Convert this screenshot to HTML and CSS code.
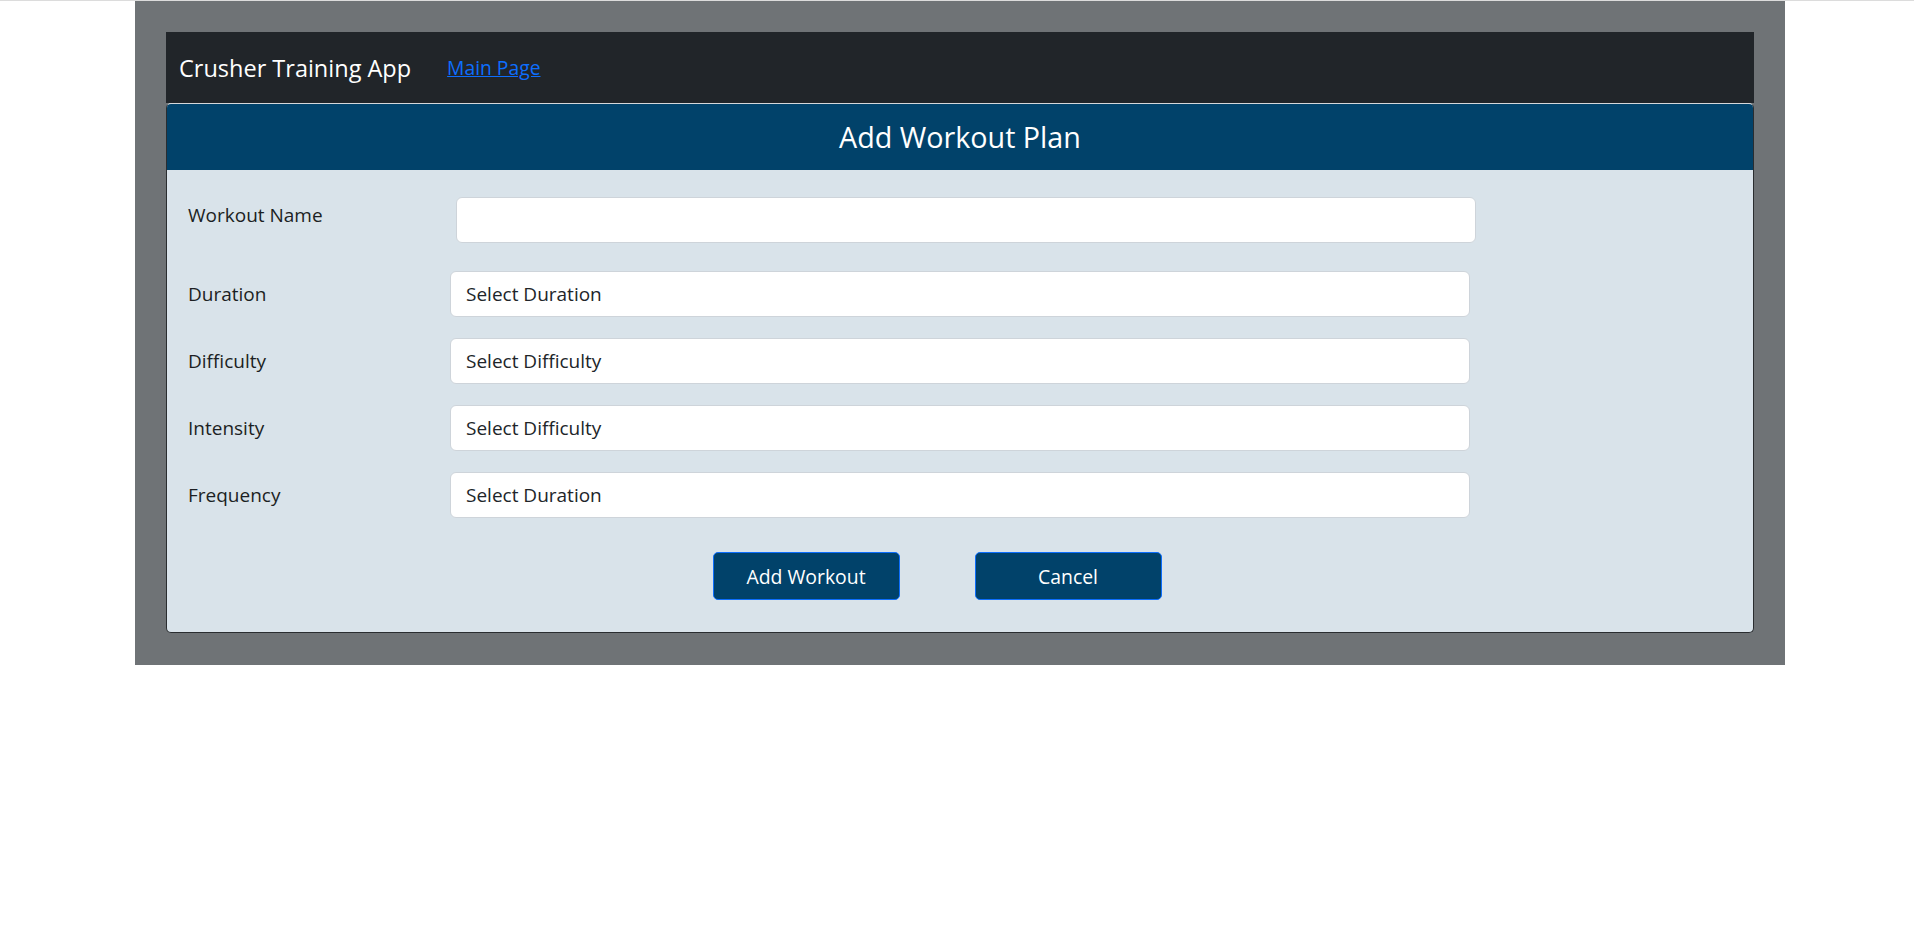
FILE: index.html
```html
<!DOCTYPE html>
<html lang="en">
<head>
<meta charset="utf-8">
<title>Crusher Training App</title>
<link rel="stylesheet" href="styles.css">
</head>
<body>
<div class="page">
  <nav class="navbar">
    <span class="brand">Crusher Training App</span>
    <a class="nav-link" href="#">Main Page</a>
  </nav>
  <div class="card">
    <div class="card-header">Add Workout Plan</div>
    <form class="card-body">
      <div class="row row-first">
        <label class="label label-first" for="wname">Workout Name</label>
        <input class="control control-first" id="wname" type="text">
      </div>
      <div class="row">
        <label class="label" for="dur">Duration</label>
        <select class="control" id="dur"><option>Select Duration</option></select>
      </div>
      <div class="row">
        <label class="label" for="dif">Difficulty</label>
        <select class="control" id="dif"><option>Select Difficulty</option></select>
      </div>
      <div class="row">
        <label class="label" for="int">Intensity</label>
        <select class="control" id="int"><option>Select Difficulty</option></select>
      </div>
      <div class="row">
        <label class="label" for="freq">Frequency</label>
        <select class="control" id="freq"><option>Select Duration</option></select>
      </div>
      <div class="actions">
        <button class="btn" type="button">Add Workout</button>
        <button class="btn" type="button">Cancel</button>
      </div>
    </form>
  </div>
</div>
</body>
</html>
```

FILE: styles.css
```css
* {
  box-sizing: border-box;
}

html, body {
  margin: 0;
  padding: 0;
  background: #ffffff;
}

body {
  border-top: 1px solid #dcdcdc;
  font-family: "Open Sans", "Noto Sans", "Liberation Sans", sans-serif;
  color: #212529;
}

.page {
  margin-left: 135px;
  width: 1650px;
  background: #6f7376;
  padding: 31px 31px 32px 31px;
}

.navbar {
  height: 71px;
  background: #212529;
  display: flex;
  align-items: center;
  padding-left: 13px;
}

.brand {
  color: #ffffff;
  font-size: 23.5px;
  margin-right: 36px;
}

.nav-link {
  color: #0d6efd;
  font-size: 19.3px;
  text-decoration: underline;
}

.card {
  border: 1px solid #2a2d30;
  border-top-color: #d6d8da;
  border-radius: 5px;
  background: #d9e3ea;
  overflow: hidden;
}

.card-header {
  height: 66px;
  background: #01426a;
  color: #ffffff;
  font-size: 28.7px;
  display: flex;
  align-items: center;
  justify-content: center;
  border-left: 1px solid #c8cdd2;
  margin-left: -1px;
  padding-bottom: 1px;
}

.card-body {
  padding: 27px 20px 32px 21px;
  margin: 0;
}

.row {
  display: flex;
  align-items: center;
  margin-bottom: 21px;
}

.row-first {
  align-items: flex-start;
  margin-bottom: 28px;
}

.label {
  width: 262px;
  font-size: 19px;
  color: #1c1f23;
}

.label-first {
  padding-top: 5px;
  width: 268px;
}

.control {
  width: 1020px;
  height: 46px;
  border: 1px solid #ced4da;
  border-radius: 6px;
  background: #ffffff;
  padding: 0 15px;
  font-family: inherit;
  font-size: 19px;
  color: #212529;
  -webkit-appearance: none;
  appearance: none;
  outline: none;
}

.actions {
  display: flex;
  justify-content: center;
  gap: 75px;
  padding-right: 47px;
  padding-top: 13px;
}

.btn {
  width: 187px;
  height: 48px;
  background: #01426a;
  color: #ffffff;
  border: 1px solid #0d6efd;
  border-radius: 5px;
  font-family: inherit;
  font-size: 19.4px;
  cursor: pointer;
}
```
